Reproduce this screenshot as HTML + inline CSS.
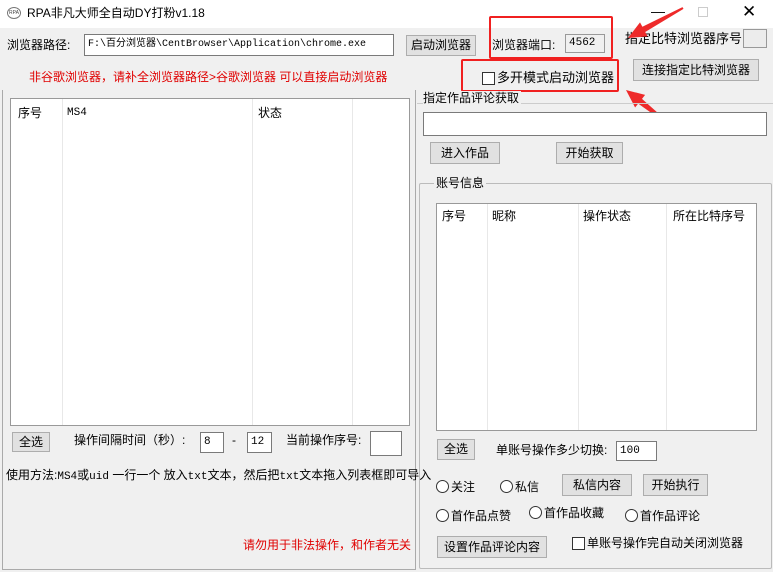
<!DOCTYPE html>
<html><head><meta charset="utf-8"><style>
*{margin:0;padding:0;box-sizing:border-box}
body{width:773px;height:572px;background:#f0f0f0;position:relative;overflow:hidden;font-family:"Liberation Sans","Noto Sans CJK SC",sans-serif;font-size:12px;color:#000}
.a{position:absolute;white-space:nowrap;line-height:14px}
.btn{position:absolute;background:#e1e1e1;border:1px solid #adadad;text-align:center;font-size:12px;line-height:19px}
.inp{position:absolute;background:#fff;border:1px solid #7a7a7a;font-family:"Liberation Mono","Noto Sans CJK SC",monospace;font-size:11px;padding-left:3px;line-height:18px;white-space:nowrap;overflow:hidden}
.red{color:#e00000}
.rb{position:absolute;border:2px solid #f02020;border-radius:2px}
.cb{position:absolute;width:13px;height:13px;border:1px solid #333;background:#fff}
.rd{display:inline-block;width:13px;height:13px;border:1px solid #333;border-radius:50%;background:#fff;vertical-align:-2px;margin-right:2px}
.vl{position:absolute;width:1px;background:#e8e8e8}
</style></head><body>
<div style="position:absolute;left:0;top:0;width:773px;height:28px;background:#fff"></div>
<div style="position:absolute;left:7px;top:7px;width:14px;height:12px;border:1px solid #777;border-radius:50%;font-size:5px;text-align:center;line-height:10px;color:#444">RPA</div>
<div class="a" style="left:27px;top:6px;font-size:12px">RPA非凡大师全自动DY打粉v1.18</div>
<div class="a" style="left:651px;top:4px;font-size:14px">—</div>
<div style="position:absolute;left:698px;top:7px;width:10px;height:10px;border:1px solid #ccc"></div>
<div class="a" style="left:742px;top:3px;font-size:17px;line-height:18px">✕</div>

<div class="a" style="left:7px;top:38px">浏览器路径:</div>
<div class="inp" style="left:84px;top:34px;width:310px;height:22px;line-height:20px;font-size:10px">F:\百分浏览器\CentBrowser\Application\chrome.exe</div>
<div class="btn" style="left:406px;top:35px;width:70px;height:21px">启动浏览器</div>
<div class="a" style="left:492px;top:38px">浏览器端口:</div>
<div class="inp" style="left:565px;top:34px;width:40px;height:19px;background:#f0f0f0;border-color:#999;line-height:17px">4562</div>
<div class="rb" style="left:489px;top:16px;width:124px;height:43px"></div>
<div class="a" style="left:625px;top:32px;font-size:13px">指定比特浏览器序号:</div>
<div style="position:absolute;left:743px;top:29px;width:24px;height:19px;border:1px solid #999;background:#ececec"></div>
<div class="rb" style="left:461px;top:59px;width:158px;height:33px"></div>
<div class="cb" style="left:482px;top:72px"></div>
<div class="a" style="left:497px;top:71px;font-size:13px">多开模式启动浏览器</div>
<div class="btn" style="left:633px;top:59px;width:126px;height:22px;line-height:20px">连接指定比特浏览器</div>
<div class="a red" style="left:29px;top:70px">非谷歌浏览器，请补全浏览器路径&gt;谷歌浏览器 可以直接启动浏览器</div>

<svg style="position:absolute;left:0;top:0" width="773" height="572">
<g fill="#ee2a2a">
<polygon points="628,38 647.6,36.4 645.2,32 683.5,8.9 682.5,7.1 642.4,26.8 640,22.4"/>
<polygon points="626,90 645.1,94.9 642,98.9 670.6,124.2 669.4,125.8 638.2,103.6 635.1,107.5"/>
</g>
</svg>

<div style="position:absolute;left:2px;top:90px;width:414px;height:480px;border:1px solid #aaa;border-top:none"></div>
<div style="position:absolute;left:10px;top:98px;width:400px;height:328px;background:#fff;border:1px solid #999"></div>
<div class="vl" style="left:62px;top:99px;height:326px"></div>
<div class="vl" style="left:252px;top:99px;height:326px"></div>
<div class="vl" style="left:352px;top:99px;height:326px"></div>
<div class="a" style="left:18px;top:106px">序号</div>
<div class="a" style="left:67px;top:106px;font-family:'Liberation Mono',monospace;font-size:11px">MS4</div>
<div class="a" style="left:258px;top:106px">状态</div>

<div style="position:absolute;left:417px;top:103px;width:356px;height:70px;border-top:1px solid #ccc"></div>
<div class="a" style="left:423px;top:91px;background:#f0f0f0;padding-right:2px">指定作品评论获取</div>
<div class="inp" style="left:423px;top:112px;width:344px;height:24px"></div>
<div class="btn" style="left:430px;top:142px;width:70px;height:22px;line-height:20px">进入作品</div>
<div class="btn" style="left:556px;top:142px;width:67px;height:22px;line-height:20px">开始获取</div>

<div style="position:absolute;left:419px;top:183px;width:353px;height:386px;border:1px solid #bbb;border-radius:2px"></div>
<div class="a" style="left:434px;top:176px;background:#f0f0f0;padding:0 2px">账号信息</div>
<div style="position:absolute;left:436px;top:203px;width:321px;height:228px;background:#fff;border:1px solid #999"></div>
<div class="vl" style="left:487px;top:204px;height:226px"></div>
<div class="vl" style="left:578px;top:204px;height:226px"></div>
<div class="vl" style="left:666px;top:204px;height:226px"></div>
<div class="a" style="left:442px;top:209px">序号</div>
<div class="a" style="left:492px;top:209px">昵称</div>
<div class="a" style="left:583px;top:209px">操作状态</div>
<div class="a" style="left:673px;top:209px">所在比特序号</div>

<div class="btn" style="left:12px;top:432px;width:38px;height:20px;line-height:18px">全选</div>
<div class="a" style="left:74px;top:433px">操作间隔时间（秒）:</div>
<div class="inp" style="left:200px;top:432px;width:24px;height:21px">8</div>
<div class="a" style="left:232px;top:433px">-</div>
<div class="inp" style="left:247px;top:432px;width:25px;height:21px">12</div>
<div class="a" style="left:286px;top:433px">当前操作序号:</div>
<div class="inp" style="left:370px;top:431px;width:32px;height:25px"></div>
<div class="a" style="left:6px;top:468px">使用方法:<span style="font-family:'Liberation Mono',monospace;font-size:11px">MS4</span>或<span style="font-family:'Liberation Mono',monospace;font-size:11px">uid</span> 一行一个 放入<span style="font-family:'Liberation Mono',monospace;font-size:11px">txt</span>文本，然后把<span style="font-family:'Liberation Mono',monospace;font-size:11px">txt</span>文本拖入列表框即可导入</div>
<div class="a red" style="left:243px;top:538px">请勿用于非法操作，和作者无关</div>

<div class="btn" style="left:437px;top:439px;width:38px;height:21px">全选</div>
<div class="a" style="left:496px;top:443px">单账号操作多少切换:</div>
<div class="inp" style="left:616px;top:441px;width:41px;height:20px">100</div>
<div class="a" style="left:436px;top:480px"><span class="rd"></span>关注</div>
<div class="a" style="left:500px;top:480px"><span class="rd"></span>私信</div>
<div class="btn" style="left:562px;top:474px;width:70px;height:22px;line-height:20px">私信内容</div>
<div class="btn" style="left:643px;top:474px;width:65px;height:22px;line-height:20px">开始执行</div>
<div class="a" style="left:436px;top:509px"><span class="rd"></span>首作品点赞</div>
<div class="a" style="left:529px;top:506px"><span class="rd"></span>首作品收藏</div>
<div class="a" style="left:625px;top:509px"><span class="rd"></span>首作品评论</div>
<div class="btn" style="left:437px;top:536px;width:110px;height:22px;line-height:20px">设置作品评论内容</div>
<div class="cb" style="left:572px;top:537px"></div>
<div class="a" style="left:587px;top:536px">单账号操作完自动关闭浏览器</div>
</body></html>
